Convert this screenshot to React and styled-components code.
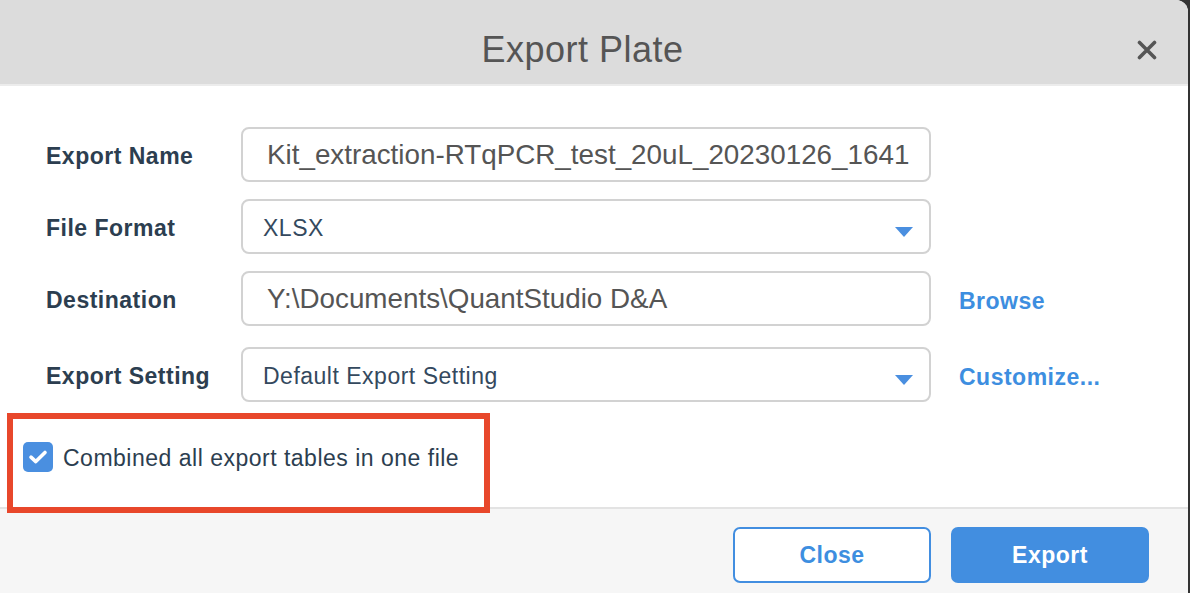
import React from 'react'
import styled, { createGlobalStyle } from 'styled-components'

const Global = createGlobalStyle`
  html, body {
    margin: 0;
    padding: 0;
    background: #333;
  }
  body {
    font-family: "Liberation Sans", Arial, sans-serif;
  }
`

const Dialog = styled.div`
  width: 1188px;
  height: 593px;
  background: #fff;
  border-top-right-radius: 12px;
  overflow: hidden;
  display: flex;
  flex-direction: column;
`

const Header = styled.div`
  height: 86px;
  box-sizing: border-box;
  padding: 16px 31px 0 28px;
  background: #dcdcdc;
  border-bottom: 2px solid #ececec;
  display: flex;
  align-items: center;
  flex-shrink: 0;
`

const Title = styled.h1`
  flex: 1;
  margin: 0;
  text-align: center;
  font-size: 36px;
  font-weight: normal;
  letter-spacing: 0.5px;
  color: #555;
`

const CloseIcon = styled.button`
  width: 20px;
  height: 20px;
  padding: 0;
  border: 0;
  background: none;
  display: flex;
  cursor: pointer;
`

const Body = styled.div`
  flex: 1;
  padding-top: 41px;
  display: flex;
  flex-direction: column;
`

const Form = styled.div`
  margin-left: 46px;
  display: grid;
  grid-template-columns: 195px 690px auto;
  row-gap: 17px;
  align-items: center;
`

const Label = styled.div`
  font-size: 23px;
  font-weight: bold;
  letter-spacing: 0.5px;
  color: #2c3e50;
  margin-top: ${p => p.$last ? '7px' : '3px'};
`

const Field = styled.div`
  height: 55px;
  box-sizing: border-box;
  border: 2px solid #d2d2d2;
  border-radius: 8px;
  display: flex;
  align-items: center;
  padding: 0 16px 0 ${p => p.$select ? '20px' : '24px'};
  font-size: ${p => p.$select ? '23px' : '27.8px'};
  letter-spacing: ${p => p.$select ? '0.5px' : '0'};
  color: ${p => p.$select ? '#34495e' : '#555'};
  margin-top: ${p => p.$last ? '4px' : '0'};
  white-space: nowrap;
  overflow: hidden;
`

const FieldText = styled.span`
  flex: 1;
  padding-top: ${p => p.$select ? '3px' : '0'};
`

const Caret = styled.span`
  width: 0;
  height: 0;
  margin-top: 10px;
  border-left: 9px solid transparent;
  border-right: 9px solid transparent;
  border-top: 10px solid #4a8fe0;
`

const Link = styled.a`
  margin-left: 28px;
  font-size: 23px;
  font-weight: bold;
  letter-spacing: 0.5px;
  color: #3d8ee0;
  text-decoration: none;
  padding-top: ${p => p.$last ? '10px' : '6px'};
  white-space: nowrap;
`

const Highlight = styled.div`
  position: relative;
  z-index: 1;
  margin: 11px 0 -6px 7px;
  width: 483px;
  height: 100px;
  box-sizing: border-box;
  border: 6px solid #e8472b;
  padding: 23px 0 0 10px;
`

const CheckRow = styled.label`
  display: flex;
  align-items: center;
  gap: 10px;
  font-size: 23px;
  letter-spacing: 0.5px;
  color: #2c3e50;
`

const Box = styled.span`
  width: 30px;
  height: 30px;
  border-radius: 5px;
  background: #4a8fe0;
  display: flex;
  align-items: center;
  justify-content: center;
  flex-shrink: 0;
`

const CheckText = styled.span`
  padding-top: 3px;
`

const Footer = styled.div`
  flex-shrink: 0;
  height: 86px;
  box-sizing: border-box;
  background: #f6f6f6;
  border-top: 2px solid #e3e3e3;
  padding: 18px 39px 0 0;
  display: flex;
  justify-content: flex-end;
  align-items: flex-start;
  gap: 20px;
`

const Button = styled.button`
  width: 198px;
  height: 56px;
  border-radius: 7px;
  font-family: inherit;
  font-size: 23px;
  font-weight: bold;
  letter-spacing: 0.5px;
  padding-top: 2px;
  cursor: pointer;
  border: 2px solid #428ee0;
  background: ${p => p.$primary ? '#428ee0' : '#fff'};
  color: ${p => p.$primary ? '#fff' : '#3d8ee0'};
`

const rows = [
  { label: 'Export Name', value: 'Kit_extraction-RTqPCR_test_20uL_20230126_1641' },
  { label: 'File Format', value: 'XLSX', select: true },
  { label: 'Destination', value: 'Y:\\Documents\\QuantStudio D&A', link: 'Browse' },
  { label: 'Export Setting', value: 'Default Export Setting', select: true, link: 'Customize...', last: true },
]

export default function App() {
  return (
    <>
      <Global />
      <Dialog>
        <Header>
          <Title>Export Plate</Title>
          <CloseIcon aria-label="Close">
            <svg width="20" height="20" viewBox="0 0 20 20">
              <path d="M2.5 2.5 L17.5 17.5 M17.5 2.5 L2.5 17.5" stroke="#555" strokeWidth="3.6" strokeLinecap="round" />
            </svg>
          </CloseIcon>
        </Header>
        <Body>
          <Form>
            {rows.map(r => (
              <React.Fragment key={r.label}>
                <Label $last={r.last}>{r.label}</Label>
                <Field $select={r.select} $last={r.last}>
                  <FieldText $select={r.select}>{r.value}</FieldText>
                  {r.select && <Caret />}
                </Field>
                {r.link ? <Link href="#" $last={r.last}>{r.link}</Link> : <span />}
              </React.Fragment>
            ))}
          </Form>
          <Highlight>
            <CheckRow>
              <Box>
                <svg width="20" height="16" viewBox="0 0 20 16">
                  <path d="M3 8.2 L7.8 12.6 L17 3.4" stroke="#fff" strokeWidth="3.6" fill="none" strokeLinecap="round" strokeLinejoin="round" />
                </svg>
              </Box>
              <CheckText>Combined all export tables in one file</CheckText>
            </CheckRow>
          </Highlight>
        </Body>
        <Footer>
          <Button>Close</Button>
          <Button $primary>Export</Button>
        </Footer>
      </Dialog>
    </>
  )
}
